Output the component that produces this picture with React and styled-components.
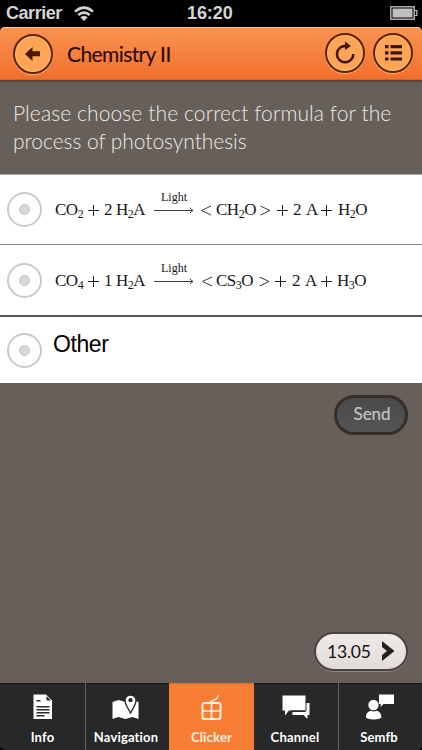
import React from "react"
import styled, { createGlobalStyle, css } from "styled-components"

const GlobalStyle = createGlobalStyle`
  * {
    box-sizing: border-box;
  }
  body {
    margin: 0;
    background: #000;
  }
`

const Screen = styled.div`
  display: flex;
  flex-direction: column;
  width: 422px;
  height: 750px;
  overflow: hidden;
  background: #000;
  font-family: "Lato", sans-serif;
`

const StatusBar = styled.div`
  display: grid;
  grid-template-columns: 181px auto 1fr;
  align-items: center;
  height: 27px;
  padding: 0 4px 0 6px;
  color: #d4d4d4;
  font: bold 18px/27px "Liberation Sans", Arial, sans-serif;
`

const Carrier = styled.div`
  display: flex;
  align-items: center;
  gap: 12px;
  letter-spacing: -0.45px;
`

const Clock = styled.div`
  letter-spacing: -0.1px;
`

const Battery = styled.svg`
  justify-self: end;
  margin-bottom: 1px;
`

const Header = styled.header`
  display: flex;
  align-items: center;
  flex: none;
  height: 53px;
  padding: 0 9px 0 13px;
  border-radius: 5px 5px 0 0;
  background: linear-gradient(#f99450, #f68140 50%, #f26f2a);
  box-shadow: inset 0 1px 0 #ffc08a, inset 0 -1px 0 #dc6020;
`

const Title = styled.h1`
  flex: 1;
  margin: 0 0 1px 14px;
  color: #2c0c02;
  font-size: 21px;
  font-weight: 400;
  letter-spacing: -0.6px;
  -webkit-text-stroke: 0.15px #2c0c02;
`

const RoundButton = styled.button`
  display: flex;
  align-items: center;
  justify-content: center;
  width: 40px;
  height: 40px;
  margin: 0 0 ${props => props.$lift || 0}px ${props => props.$gap || 0}px;
  padding: 0;
  border: 2px solid #5c2409;
  border-radius: 50%;
  background: #fda555;
  box-shadow: inset 0 0 0 1px #ffb976, 0 1px 0 #ffb27a;
`

const Body = styled.main`
  display: flex;
  flex-direction: column;
  flex: 1;
  background: linear-gradient(#5a3d2e, #5d534d 2px, #665f5a 4px);
`

const Question = styled.p`
  height: 94px;
  margin: 0;
  padding: 19px 0 0 13px;
  color: #eeeae6;
  font-size: 21px;
  font-weight: 300;
  line-height: 28px;
`

const Line = styled.span`
  display: block;
  white-space: nowrap;
  letter-spacing: ${props => props.$spacing}px;
`

const Option = styled.div`
  display: flex;
  align-items: center;
  height: ${props => props.$height}px;
  padding-left: 7px;
  background: #fff;
  border-top: ${props => props.$border};
`

const Radio = styled.span`
  display: flex;
  align-items: center;
  justify-content: center;
  flex: none;
  width: 35px;
  height: 35px;
  border: 2px solid #cacaca;
  border-radius: 50%;

  &::after {
    content: "";
    width: 9px;
    height: 9px;
    border: 1px solid #c4c4c4;
    border-radius: 50%;
    background: #d8d8d8;
  }
`

const Formula = styled.div`
  display: grid;
  grid-template-columns: ${props => props.$columns};
  margin: ${props => props.$drop || 0}px 0 0 13px;
  color: #181818;
  font: 17px/22px "Liberation Serif", "Times New Roman", serif;
  white-space: nowrap;
`

const Term = styled.span`
  letter-spacing: -0.5px;
`

const Operator = styled.svg`
  margin-top: 6px;
`

const Sub = styled.sub`
  font-size: 12px;
  line-height: 0;
  vertical-align: -3px;
`

const Reaction = styled.span`
  display: flex;
  flex-direction: column;
  align-items: center;
  gap: 4px;
  width: 40px;
  height: 22px;
  margin-top: -8px;
  font-size: 12px;
  line-height: 12px;
`

const ArrowLine = styled.svg`
  flex: none;
  width: 40px;
  height: 7px;
`

const Other = styled.span`
  margin: 0 0 13px 11px;
  color: #000;
  font: 23px/26px "Liberation Sans", Arial, sans-serif;
  letter-spacing: -0.4px;
`

const pill = css`
  display: flex;
  align-items: center;
  align-self: flex-end;
  border-radius: 22px;
  font-family: "Lato", sans-serif;
`

const SendButton = styled.button`
  ${pill}
  justify-content: center;
  width: 74px;
  height: 40px;
  margin: 12px 14px 0 0;
  padding: 0 0 3px 2px;
  border: 3px solid #372e29;
  background: linear-gradient(#4a4a4b, #545455);
  color: #c5c3c2;
  font-size: 17px;
  letter-spacing: -0.1px;
  -webkit-text-stroke: 0.2px #c5c3c2;
`

const NextButton = styled.button`
  ${pill}
  justify-content: space-between;
  width: 94px;
  height: 39px;
  margin: auto 14px 12px 0;
  padding: 0 11px 1px 11px;
  border: 2px solid #4b413e;
  background: linear-gradient(#f0eae7, #e2dcd8);
  box-shadow: 0 1px 0 #8d8580;
  color: #111;
  font-size: 17.5px;
  letter-spacing: -0.2px;
`

const Tabs = styled.nav`
  display: grid;
  grid-template-columns: 85px 84px 85px 84px 84px;
  flex: none;
  height: 67px;
  border-radius: 0 0 5px 5px;
  overflow: hidden;
  background: #26282a;
`

const Tab = styled.div`
  display: flex;
  flex-direction: column;
  align-items: center;
  padding: 11px ${props => (props.$divider ? 3 : 0)}px 0 0;
  background: ${props => (props.$active ? "#f77c34" : "#26282a")};
  border-left: ${props => (props.$divider ? "1px solid #6a625d" : "none")};
  box-shadow: inset 0 2px 1px -1px ${props => (props.$active ? "#e26d2b" : "#111214")};
  color: ${props => (props.$active ? "#fff3df" : "#fff")};
  font-size: 13px;
  font-weight: 700;
  line-height: 16px;
`

const TabIcon = styled.svg`
  width: 32px;
  height: 32px;
  margin-bottom: 3px;
`

const TabLabel = styled.span`
  margin-right: ${props => props.$shift || 0}px;
  letter-spacing: ${props => props.$spacing || 0}px;
`

const Plus = () => (
  <Operator width="11" height="11" viewBox="0 0 11 11" stroke="#222" strokeWidth="1">
    <path d="M5.5 0v11M0 5.5h11" />
  </Operator>
)

const Angle = ({ right }) => (
  <Operator width="11" height="11" viewBox="0 0 11 11" fill="none" stroke="#222" strokeWidth="0.9">
    <path d={right ? "M.5 1l9.5 4.5L.5 10" : "M10 1L.5 5.5 10 10"} />
  </Operator>
)

const Arrow = () => (
  <ArrowLine viewBox="0 0 40 7" fill="none" stroke="#222" strokeWidth="0.9">
    <path d="M0 3.5h39M36 .8q1 2 3 2.7q-2 .7-3 2.7" />
  </ArrowLine>
)

const Equation = ({ first, amount, sugar, sugarSub, last, columns, drop }) => (
  <Formula $columns={columns} $drop={drop}>
    <Term>CO<Sub>{first}</Sub></Term>
    <Plus />
    <Term>{amount}</Term>
    <Term>H<Sub>2</Sub>A</Term>
    <Reaction>
      Light
      <Arrow />
    </Reaction>
    <Angle />
    <Term>{sugar}<Sub>{sugarSub}</Sub>O</Term>
    <Angle right />
    <Plus />
    <Term>2</Term>
    <Term>A</Term>
    <Plus />
    <Term>H<Sub>{last}</Sub>O</Term>
  </Formula>
)

const tabs = [
  {
    label: "Info",
    spacing: 0.2,
    icon: (
      <>
        <path fill="#fff" d="M6.5.5H19l6 6V25H6.5z" />
        <path fill="#26282a" d="M19.5 2v4.5H24zM9.500 6h4v1.400h-4zM9.5 12h13v1.5h-13zM9.5 15h13v1.5h-13zM9.5 18h13v1.5h-13zM9.5 21h8v1.5h-8z" />
      </>
    ),
  },
  {
    label: "Navigation",
    divider: true,
    spacing: 0.15,
    icon: (
      <>
        <path fill="#fff" d="M2.5 8l6-2 7 2 7-2 6 2v17l-6-2-7 2-7-2-6 2z" />
        <path fill="#fff" stroke="#26282a" strokeWidth="1.3" d="M20.5 19.5c-1-4-5.5-8-5.5-13a5.5 5.5 0 0 1 11 0c0 5-4.5 9-5.5 13z" />
        <circle cx="20.5" cy="6.2" r="2.1" fill="#26282a" />
      </>
    ),
  },
  {
    label: "Clicker",
    active: true,
    spacing: 0.2,
    icon: (
      <g fill="none" stroke="#fff3df">
        <rect x="6.5" y="9" width="18" height="16" rx="2" strokeWidth="2" />
        <path strokeWidth="1.7" d="M15.5 9v16M6.5 17h18" />
        <path strokeWidth="1.4" d="M15.5 9c0-3 2-3 4-3.500s1.500-3 3.500-4.500" />
        <path strokeWidth="2.5" d="M14 8h3" />
      </g>
    ),
  },
  {
    label: "Channel",
    shift: 2,
    spacing: 0.2,
    icon: (
      <>
        <path fill="#fff" d="M25 9h4.5v12h-2v4l-4-4h-11v-3H25z" />
        <path fill="#fff" d="M2.5 1.5h23v15H9l-4 5v-5H2.5z" />
        <path fill="none" stroke="#26282a" d="M26 8v9H11" />
      </>
    ),
  },
  {
    label: "Semfb",
    divider: true,
    spacing: 0.1,
    icon: (
      <>
        <circle cx="10.5" cy="11" r="5.2" fill="#fff" />
        <path fill="#fff" d="M3 23.5c0-4 2-6.5 5-6.8 1.5 1 4 1 5.5 0 3 .5 5 3 5 6.8-2 2.5-13.5 2.5-15.5 0zM16 .5h15V10H20.5l-2.8 3v-3H16z" />
      </>
    ),
  },
]

const App = () => (
  <>
    <GlobalStyle />
    <Screen>
      <StatusBar>
        <Carrier>
          Carrier
          <svg width="20" height="16" viewBox="0 0 20 16" fill="none" stroke="#d4d4d4" strokeWidth="2.6">
            <path d="M1 5.6Q10-2.4 19 5.6M4.2 9.1Q10 4 15.8 9.1" />
            <path fill="#d4d4d4" stroke="none" d="M6.3 11.3q3.7-3 7.4 0L10 15z" />
          </svg>
        </Carrier>
        <Clock>16:20</Clock>
        <Battery width="28" height="14" viewBox="0 0 28 14">
          <rect x=".8" y=".8" width="23.4" height="12.4" fill="none" stroke="#c9c9c9" strokeWidth="1.3" />
          <rect x="2.5" y="2.5" width="20" height="9" fill="#bfbfbf" />
          <path d="M25 4.5h1.8v5H25" fill="none" stroke="#c9c9c9" strokeWidth="1.2" />
        </Battery>
      </StatusBar>
      <Header>
        <RoundButton>
          <svg width="16" height="14" viewBox="0 0 16 14" fill="#4a1703">
            <path d="M0 7l7.5-7v4.3H15v5H7.5V14z" />
          </svg>
        </RoundButton>
        <Title>Chemistry II</Title>
        <RoundButton $lift={2}>
          <svg width="22" height="24" viewBox="0 0 22 24">
            <path d="M12 5A8.2 8.2 0 1 0 19.3 13" fill="none" stroke="#3f1404" strokeWidth="2.5" />
            <path d="M11 .5l6 4.5-6 4z" fill="#3f1404" />
          </svg>
        </RoundButton>
        <RoundButton $lift={2} $gap={8}>
          <svg width="17" height="16" viewBox="0 0 17 16" fill="#3f1404">
            <path d="M0 0h3.5v3.2H0zM5.5 0H17v3.2H5.5zM0 6.2h3.5v3.2H0zM5.5 6.2H17v3.2H5.5zM0 12.4h3.5v3.2H0zM5.5 12.4H17v3.2H5.5z" />
          </svg>
        </RoundButton>
      </Header>
      <Body>
        <Question>
          <Line $spacing={0.1}>Please choose the correct formula for the</Line>
          <Line $spacing={-0.05}>process of photosynthesis</Line>
        </Question>
        <Option $height={70} $border="1px solid #aaa6a3">
          <Radio />
          <Equation
            first="2"
            amount="2"
            sugar="CH"
            sugarSub="2"
            last="2"
            columns="33px 16px 12px 38px 47px 15px 44px 17px 16px 13px 15px 17px 32px"
          />
        </Option>
        <Option $height={71} $border="1px solid #8a8a8a">
          <Radio />
          <Equation
            first="4"
            amount="1"
            sugar="CS"
            sugarSub="3"
            last="3"
            drop={2}
            columns="33px 16px 12px 38px 48px 14px 43px 16px 17px 13px 16px 16px 32px"
          />
        </Option>
        <Option $height={68} $border="2px solid #555">
          <Radio />
          <Other>Other</Other>
        </Option>
        <SendButton>Send</SendButton>
        <NextButton>
          13.05
          <svg width="14" height="20" viewBox="0 0 14 20" fill="#262120">
            <path d="M1 0l12.5 10L1 20v-6l5-4-5-4z" />
          </svg>
        </NextButton>
      </Body>
      <Tabs>
        {tabs.map(tab => (
          <Tab key={tab.label} $active={tab.active} $divider={tab.divider}>
            <TabIcon viewBox="0 0 32 32">{tab.icon}</TabIcon>
            <TabLabel $spacing={tab.spacing} $shift={tab.shift}>{tab.label}</TabLabel>
          </Tab>
        ))}
      </Tabs>
    </Screen>
  </>
)

export default App
